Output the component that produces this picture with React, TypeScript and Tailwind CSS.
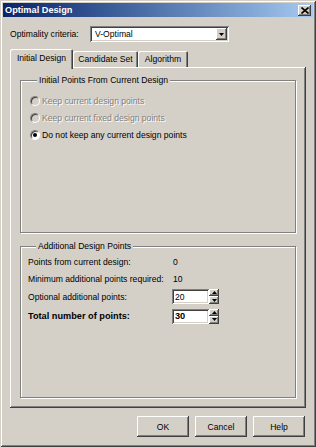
const raised =
  "shadow-[inset_-1px_-1px_0_#404040,inset_1px_1px_0_#ffffff,inset_-2px_-2px_0_#808080,inset_2px_2px_0_#d4d0c8]";
const sunken =
  "shadow-[inset_1px_1px_0_#808080,inset_-1px_-1px_0_#ffffff,inset_2px_2px_0_#404040,inset_-2px_-2px_0_#d4d0c8]";
const etched =
  "border border-[#808080] shadow-[inset_1px_1px_0_#ffffff,1px_1px_0_#ffffff]";

function Radio({ label, checked, disabled }: { label: string; checked?: boolean; disabled?: boolean }) {
  return (
    <div className="h-[17px] flex items-center gap-[2px]">
      <div
        className={`w-[10px] h-[10px] rounded-full border border-t-[#808080] border-l-[#808080] border-r-white border-b-white shadow-[inset_1px_1px_0_#404040] flex items-center justify-center ${
          disabled ? "bg-[#d4d0c8]" : "bg-white"
        }`}
      >
        {checked ? <div className="w-[4px] h-[4px] rounded-full bg-black" /> : null}
      </div>
      <span className={disabled ? "text-[#808080] [text-shadow:1px_1px_0_#ffffff]" : ""}>{label}</span>
    </div>
  );
}

function Spinner({ value, bold }: { value: string; bold?: boolean }) {
  return (
    <div className="flex">
      <div className={`w-[37px] h-[15px] bg-white ${sunken} flex items-center pl-[3px] ${bold ? "font-bold text-[9.2px]" : ""}`}>
        {value}
      </div>
      <div className="flex flex-col w-[10px]">
        <div className={`h-[7px] bg-[#d4d0c8] ${raised} flex items-center justify-center`}>
          <svg width="5" height="3" viewBox="0 0 5 3">
            <path d="M2.5 0 L5 3 L0 3 Z" fill="#000" />
          </svg>
        </div>
        <div className={`h-[8px] bg-[#d4d0c8] ${raised} flex items-center justify-center`}>
          <svg width="5" height="3" viewBox="0 0 5 3">
            <path d="M0 0 L5 0 L2.5 3 Z" fill="#000" />
          </svg>
        </div>
      </div>
    </div>
  );
}

export default function App() {
  return (
    <div className="w-[316px] h-[447px] bg-[#d4d0c8] p-[3px] flex flex-col shadow-[inset_1px_1px_0_#d4d0c8,inset_-1px_-1px_0_#404040,inset_2px_2px_0_#ffffff,inset_-2px_-2px_0_#808080] font-['Liberation_Sans',Arial,sans-serif] text-[8.6px] text-black leading-[10px]">
      <div className="h-[14px] flex items-center justify-between pl-[2px] pr-[2px] bg-linear-to-r from-[#0a246a] to-[#a6caf0]">
        <span className="text-white font-bold text-[9.2px]">Optimal Design</span>
        <div className={`w-[13px] h-[11px] bg-[#d4d0c8] ${raised} flex items-center justify-center`}>
          <svg width="8" height="7" viewBox="0 0 8 7">
            <path d="M0.5 0.5 L7.5 6.5 M7.5 0.5 L0.5 6.5" stroke="#000" strokeWidth="1.6" />
          </svg>
        </div>
      </div>

      <div className="flex flex-col px-[7px]">
        <div className="mt-[9px] h-[16px] flex items-center">
          <span className="w-[80px]">Optimality criteria:</span>
          <div className={`w-[139px] h-[16px] bg-white ${sunken} flex items-center pl-[5px] pr-[2px]`}>
            <span>V-Optimal</span>
            <div className={`ml-auto w-[11px] h-[12px] bg-[#d4d0c8] ${raised} flex items-center justify-center`}>
              <svg width="5" height="3" viewBox="0 0 5 3">
                <path d="M0 0 L5 0 L2.5 3 Z" fill="#000" />
              </svg>
            </div>
          </div>
        </div>

        <div className="mt-[7px] h-[18px] flex items-end">
          <div className="relative z-10 w-[63px] h-[20px] -mb-[2px] bg-[#d4d0c8] rounded-t-[2px] shadow-[inset_1px_1px_0_#ffffff,inset_-1px_0_0_#404040,inset_-2px_0_0_#808080] flex items-center justify-center pb-[2px]">
            Initial Design
          </div>
          <div className="w-[65px] h-[16px] rounded-t-[2px] shadow-[inset_1px_1px_0_#ffffff,inset_-1px_0_0_#404040,inset_-2px_0_0_#808080] flex items-center justify-center">
            Candidate Set
          </div>
          <div className="w-[50px] h-[16px] rounded-t-[2px] shadow-[inset_1px_1px_0_#ffffff,inset_-1px_0_0_#404040,inset_-2px_0_0_#808080] flex items-center justify-center">
            Algorithm
          </div>
        </div>

        <div className={`h-[341px] ${raised} flex flex-col pl-[10px] pr-[10px] pt-[8px]`}>
          <fieldset className={`h-[158px] ${etched} pl-[9px]`}>
            <legend className="ml-[7px] px-[2px] bg-[#d4d0c8]">Initial Points From Current Design</legend>
            <div className="flex flex-col pt-[7px]">
              <Radio label="Keep current design points" disabled />
              <Radio label="Keep current fixed design points" disabled />
              <Radio label="Do not keep any current design points" checked />
            </div>
          </fieldset>

          <fieldset className={`mt-[8px] h-[157px] ${etched} pl-[7px]`}>
            <legend className="ml-[8px] px-[2px] bg-[#d4d0c8]">Additional Design Points</legend>
            <div className="flex flex-col pt-[2px]">
              <div className="h-[17px] flex items-center">
                <span className="w-[144px]">Points from current design:</span>
                <span className="pl-[1px]">0</span>
              </div>
              <div className="h-[17px] flex items-center">
                <span className="w-[144px]">Minimum additional points required:</span>
                <span className="pl-[1px]">10</span>
              </div>
              <div className="h-[19px] flex items-center">
                <span className="w-[144px]">Optional additional points:</span>
                <Spinner value="20" />
              </div>
              <div className="h-[20px] flex items-center">
                <span className="w-[144px] font-bold text-[9.2px]">Total number of points:</span>
                <Spinner value="30" bold />
              </div>
            </div>
          </fieldset>
        </div>

        <div className="mt-[8px] flex justify-end gap-[6px] pr-[1px]">
          {["OK", "Cancel", "Help"].map((b) => (
            <div key={b} className={`w-[52px] h-[21px] bg-[#d4d0c8] ${raised} flex items-center justify-center`}>
              {b}
            </div>
          ))}
        </div>
      </div>
    </div>
  );
}
